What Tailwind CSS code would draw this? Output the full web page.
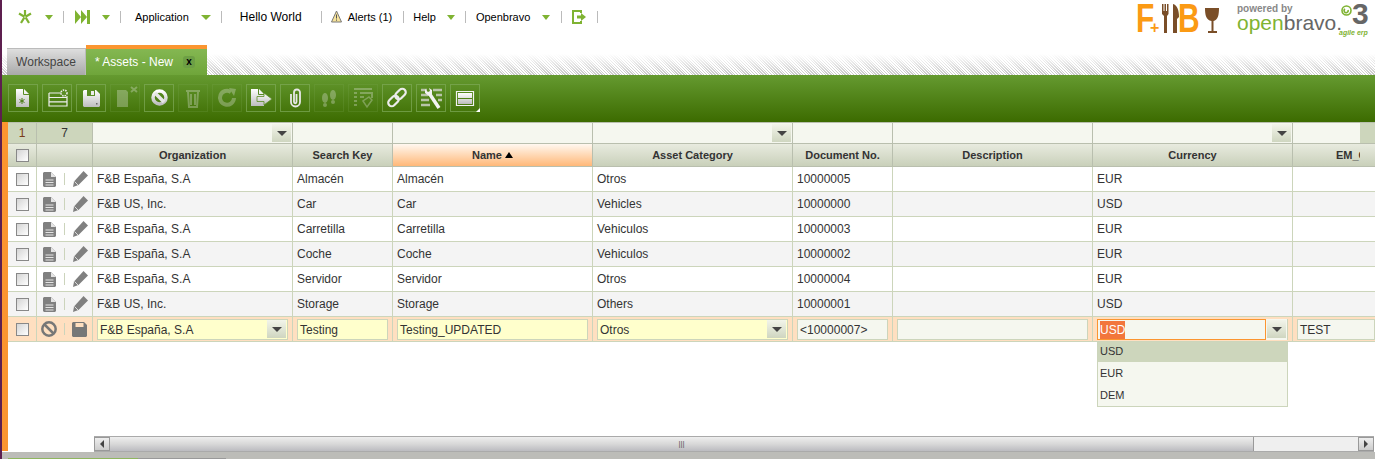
<!DOCTYPE html>
<html lang="en">
  <head>
    <meta charset="UTF-8" />
    <title>Assets - New</title>
    <script src="https://cdn.jsdelivr.net/npm/@tailwindcss/browser@4"></script>
  </head>
  <body class="h-[459px] w-[1375px] overflow-hidden bg-white font-['Liberation_Sans',Arial,sans-serif] text-[#333]">
    <svg class="absolute h-0 w-0">
      <defs>
        <linearGradient id="w" x1="0" y1="0" x2="0" y2="1"><stop offset="0" stop-color="#fff" /><stop offset="1" stop-color="#bdbdbd" /></linearGradient>
      </defs>
    </svg>
    <div class="flex h-[459px] flex-col border-l-2 border-[#5d1f4f]">
      <!-- top nav -->
      <div class="relative flex h-[45px] shrink-0 items-start pt-[11px] pl-[16px] text-[11px] leading-[13px] text-black">
        <svg class="mt-[-1px] h-[14px] w-[14px]" viewBox="0 0 14 14" fill="none" stroke="#7fb332" stroke-width="2.2"><path d="M7 0v6M1 3.5l5.5 3.2M13 3.5 7.5 6.7M3 13l3.4-5.6M11 13 7.6 7.4"/></svg>
        <i class="mt-[4px] ml-[13px] h-0 w-0 border-x-[4px] border-t-[5px] border-x-transparent border-t-[#7fb332]"></i>
        <i class="ml-[10px] h-[12px] w-px bg-[#bbb]"></i>
        <svg class="mt-[-1px] ml-[11px] h-[14px] w-[15px]" viewBox="0 0 15 14" fill="#7fb332"><path d="M0 0l6 7-6 7zM6 0l6 7-6 7z"/><path d="M12 0h3v14h-3z"/></svg>
        <i class="mt-[4px] ml-[12px] h-0 w-0 border-x-[4px] border-t-[5px] border-x-transparent border-t-[#7fb332]"></i>
        <i class="ml-[10px] h-[12px] w-px bg-[#bbb]"></i>
        <span class="ml-[14px]">Application</span>
        <i class="mt-[4px] ml-[12px] h-0 w-0 border-x-[5px] border-t-[5px] border-x-transparent border-t-[#7fb332]"></i>
        <i class="ml-[10px] h-[12px] w-px bg-[#bbb]"></i>
        <span class="ml-[18px] text-[12px]">Hello World</span>
        <i class="ml-[19px] h-[12px] w-px bg-[#bbb]"></i>
        <svg class="mt-[-1px] ml-[9px] h-[13px] w-[11px]" viewBox="0 0 11 13"><path d="M5.5 1 10.5 12H.5z" fill="#f7e39a" stroke="#777"/><path d="M5.5 4.5v4M5.5 9.5v1.2" stroke="#555"/></svg>
        <span class="ml-[6px]">Alerts (1)</span>
        <i class="ml-[11px] h-[12px] w-px bg-[#bbb]"></i>
        <span class="ml-[9px]">Help</span>
        <i class="mt-[4px] ml-[11px] h-0 w-0 border-x-[4px] border-t-[5px] border-x-transparent border-t-[#7fb332]"></i>
        <i class="ml-[10px] h-[12px] w-px bg-[#bbb]"></i>
        <span class="ml-[10px]">Openbravo</span>
        <i class="mt-[4px] ml-[12px] h-0 w-0 border-x-[4px] border-t-[5px] border-x-transparent border-t-[#7fb332]"></i>
        <i class="ml-[11px] h-[12px] w-px bg-[#bbb]"></i>
        <svg class="mt-[-1px] ml-[10px] h-[14px] w-[15px]" viewBox="0 0 15 14" fill="none" stroke="#7fb332" stroke-width="2"><path d="M9 3V1H1v12h8v-2"/><path d="M5 7h5" stroke-width="3"/><path d="M9 3l5 4-5 4z" fill="#7fb332" stroke="none"/></svg>
        <i class="ml-[10px] h-[12px] w-px bg-[#bbb]"></i>

        <!-- F+B logo -->
        <div class="absolute top-0 left-[1133px] h-[36px] w-[85px] font-bold">
          <span class="absolute top-[-2px] left-[1px] origin-left scale-x-75 text-[40px] leading-[40px] text-[#fb9a14]">F</span>
          <span class="absolute top-[20px] left-[15px] text-[16px] leading-[16px] text-[#fb9a14]">+</span>
          <svg class="absolute top-[4px] left-[27px] h-[29px] w-[18px]" viewBox="0 0 18 29" fill="#7a4e28"><path d="M0 0h1.500v7h1V0h1.500v7h1V0h1.500v10l-1.500 2v17H2V12L0 10zM11 0c4 1 6 6 6 13l-2 2v14h-4z"/></svg>
          <span class="absolute top-[-2px] left-[43px] origin-left scale-x-75 text-[40px] leading-[40px] text-[#fb9a14]">B</span>
          <svg class="absolute top-[8px] left-[70px] h-[25px] w-[15px]" viewBox="0 0 15 25" fill="#7a4e28"><path d="M0 0h14c0 7-1 12-5.500 13v10h3.500v2H3v-2h3.500V13C1 12 0 7 0 0z"/></svg>
        </div>
        <!-- openbravo logo -->
        <div class="absolute top-0 left-[1235px] h-[36px] w-[138px]">
          <span class="absolute top-[4px] left-0 text-[10px] leading-[10px] font-bold text-[#888]">powered by</span>
          <span class="absolute top-[14px] left-0 text-[21px] leading-[18px] text-[#7fb332]">open<span class="text-[#666]">bravo.</span></span>
          <svg class="absolute top-[5px] left-[104px] h-[11px] w-[11px]" viewBox="0 0 11 11" fill="none" stroke="#7fb332" stroke-width="1.6"><circle cx="5.5" cy="5.5" r="4.5"/><path d="M7 5a2 2 0 1 1-3-1"/></svg>
          <span class="absolute top-[0px] left-[115px] text-[30px] leading-[28px] font-bold text-[#666]">3</span>
          <span class="absolute top-[29px] left-[102px] text-[7px] leading-[7px] font-bold text-[#7fb332] italic">agile erp</span>
        </div>
      </div>

      <!-- tabs -->
      <div class="flex h-[30px] shrink-0 items-end bg-[linear-gradient(#fff_30%,rgba(255,255,255,0)),repeating-linear-gradient(45deg,#c8c8c8,#c8c8c8_1px,#fff_1px,#fff_2px)] pl-[5px] text-[12px]">
        <div class="flex h-[27px] w-[79px] items-center justify-center border-t border-r border-[#bbb] bg-[linear-gradient(#dedede,#a9a9a9)] text-[#444]">Workspace</div>
        <div class="flex h-[30px] w-[121px] items-center gap-[10px] border-t-4 border-[#fb9530] bg-[linear-gradient(#84b752,#6fa53a)] pl-[9px] text-white">
          <span>* Assets - New</span>
          <span class="flex h-[12px] w-[12px] items-center justify-center rounded-[3px] bg-[#6d9f45] pb-[1px] text-[10px] leading-none font-bold text-black">x</span>
        </div>
      </div>

      <!-- toolbar -->
      <div id="toolbar" class="flex h-[47px] shrink-0 items-start gap-[4px] bg-[linear-gradient(#659a30,#3c6b00)] pt-[9px] pl-[6px]"></div>

      <!-- grid with orange side strip -->
      <div class="flex min-h-0 flex-1 flex-col border-l-[6px] border-[#fb9530]">
        <div id="grid" class="relative grid h-[314px] shrink-0 grid-cols-[29px_56px_200px_100px_200px_200px_100px_200px_200px_83px] auto-rows-max overflow-hidden text-[12px] text-[#333]"></div>
        <!-- horizontal scrollbar -->
        <div class="mr-px ml-[86px] flex h-[16px] shrink-0 items-stretch border-y border-[#aaa] bg-[#efefef]">
          <div class="flex w-[16px] items-center justify-center border border-[#999] bg-[linear-gradient(#eee,#ccc)]"><i class="h-0 w-0 border-y-[4px] border-r-[4px] border-y-transparent border-r-[#444]"></i></div>
          <div class="flex w-[1144px] items-center justify-center border-r border-[#999] bg-[linear-gradient(#eee,#d8d8d8_50%,#bbbbc0)] text-[8px] leading-none text-[#555]">|||</div>
          <div class="flex-1"></div>
          <div class="flex w-[16px] items-center justify-center border border-[#999] bg-[linear-gradient(#eee,#ccc)]"><i class="h-0 w-0 border-y-[4px] border-l-[4px] border-y-transparent border-l-[#444]"></i></div>
        </div>
      </div>
      <div class="mt-[1px] flex h-[7px] shrink-0 items-end bg-[#bcbcb8]">
        <div class="ml-[6px] h-px w-[130px] bg-[#8fb65f]"></div>
        <div class="h-px w-[88px] bg-[#999]"></div>
      </div>
    </div>

    <script>
      const file = '<svg class="h-[15px] w-[13px]" viewBox="0 0 13 15"><path d="M1 0h7l5 5v9l-1 1H1l-1-1V1z" fill="#808080"/><path d="M8 0v5h5" fill="#e4e4e4"/><path d="M2.500 8h8M2.500 10.500h8M2.500 13h8" stroke="#e4e4e4"/></svg>';
      const pencil = '<svg class="h-[16px] w-[16px]" viewBox="0 0 16 16"><path d="M11.500 0l4.500 4.500-9.500 9.500-5.500 2 1-5.500z" fill="#808080"/><path d="M2.500 10.500l3.500 3.500" stroke="#ddd"/></svg>';
      const ban = '<svg class="h-[16px] w-[16px]" viewBox="0 0 16 16" fill="none" stroke="#777" stroke-width="2.5"><circle cx="8" cy="8" r="6.700"/><path d="M3 3l10 10"/></svg>';
      const disk = '<svg class="h-[15px] w-[15px]" viewBox="0 0 15 15"><path d="M1 0h11l3 3v11l-1 1H1l-1-1V1z" fill="#777"/><path d="M3.500 1h8v4h-8z" fill="#ffdfc0"/></svg>';
      const caret = '<i class="h-0 w-0 border-x-[5px] border-t-[5px] border-x-transparent border-t-[#444]"></i>';
      const check = '<span class="h-[13px] w-[13px] border border-[#888] bg-[linear-gradient(135deg,#d4d4d4,#fff)]"></span>';
      const sep = '<i class="mr-[7px] ml-[8px] h-[12px] w-px bg-[#ccd4bc]"></i>';
      const arrowBtn = `<span class="mr-px flex h-[18px] w-[19px] shrink-0 items-center justify-center bg-[linear-gradient(#f2f4ea,#cfd6c0)]">${caret}</span>`;

      // toolbar buttons: [svg inner, enabled]
      const g = "#5a8d25";
      const toolIcons = [
        [`<path d="M6 4h8l5 5v13H6z" fill="url(#w)"/><path d="M13.500 4v5.500H19" fill="none" stroke="${g}"/><path d="M12 13v6M9.500 14.500l5 3M14.500 14.500l-5 3" stroke="#4a7c15"/>`, 1],
        [`<path d="M5 8h15M5 8v13h18V11M5 12.500h18M5 16.800h18" fill="none" stroke="#eee" stroke-width="1.200"/><circle cx="20" cy="8" r="3" fill="${g}" stroke="#eee" stroke-width="1.500" stroke-dasharray="1.500 1"/>`, 1],
        [`<path d="M6 5h12l4 4v12l-1 1H6l-1-1V6z" fill="url(#w)"/><path d="M9 5h8v6H9z" fill="${g}"/><path d="M13 6h3v4h-3z" fill="#eee"/><path d="M18 18h1.500v1.500H18z" fill="#666"/>`, 1],
        [`<path d="M5 5h9l2 2v15H5z" fill="#eee"/><path d="M19 2l6 5M25 2l-6 5" stroke="#eee" stroke-width="2"/>`, 0],
        [`<circle cx="13.500" cy="12.500" r="6.500" fill="none" stroke="url(#w)" stroke-width="3.500"/><path d="M9 8l9 9" stroke="#e6e6e6" stroke-width="3.500"/>`, 1],
        [`<path d="M6 6h14M8 7l1 15h8l1-15M11 9v11M15 9v11" fill="none" stroke="#eee" stroke-width="2"/>`, 0],
        [`<path d="M20 13a7 7 0 1 1-3-6" fill="none" stroke="#eee" stroke-width="4"/><path d="M15 3l7 1-2 7z" fill="#eee"/>`, 0],
        [`<path d="M3 4h8l5 5v12H3z" fill="url(#w)"/><path d="M10.500 4v5.500H16" fill="none" stroke="${g}"/><path d="M9 11.500h7V8l8 6-8 6v-3.500H9z" fill="url(#w)" stroke="${g}" stroke-width=".8"/>`, 1],
        [`<path d="M9 9v8a4.500 4.500 0 0 0 9 0V7.500a3 3 0 0 0-6 0V17a1.200 1.200 0 0 0 2.500 0V9" fill="none" stroke="#e8e8e8" stroke-width="1.800"/>`, 1],
        [`<ellipse cx="9" cy="13" rx="3" ry="5" fill="#eee"/><ellipse cx="17" cy="10" rx="3" ry="5" fill="#eee"/><circle cx="9" cy="20" r="2" fill="#eee"/><circle cx="17" cy="17" r="2" fill="#eee"/>`, 0],
        [`<path d="M4 4h18M4 8h3M4 12h3M4 16h3M4 20h3M10 8h12v5M10 12h4" fill="none" stroke="#eee" stroke-width="2"/><path d="M13 16l4 6 5-7-3-3z" fill="none" stroke="#eee" stroke-width="1.500"/>`, 0],
        [`<rect x="13" y="3" width="7" height="12" rx="3.500" transform="rotate(45 16.500 9)" fill="none" stroke="#ececec" stroke-width="2.200"/><rect x="6" y="10" width="7" height="12" rx="3.500" transform="rotate(45 9.500 16)" fill="none" stroke="#ececec" stroke-width="2.200"/>`, 1],
        [`<path d="M3 5h6M3 10h7M3 15h8M3 20h9M15 5h9M18 10h6M20 15h4" stroke="#b8c4a8" stroke-width="2.500"/><path d="M11 8l10 15" stroke="#f2f2f2" stroke-width="3.500"/><path d="M7 4l3 3 2-1-1-3 3 2v5l-3 1-4-3z" fill="#f2f2f2"/>`, 1],
        [`<path d="M4.500 6.500h17v14h-17z" fill="none" stroke="#f2f2f2" stroke-width="1.200"/><path d="M6 8h14v5H6zM6 14h14v5H6z" fill="url(#w)"/>`, 1],
      ];
      document.getElementById("toolbar").innerHTML = toolIcons
        .map(([icon, on], i) =>
          `<div class="relative flex h-[28px] w-[30px] items-center justify-center border border-[#7fa958]/70 ${on ? "" : "opacity-30"}">
            <svg class="h-[26px] w-[26px]" viewBox="0 0 26 26">${icon}</svg>
            ${i === 13 ? '<svg class="absolute right-[-1px] bottom-[-1px] h-[4px] w-[4px]" viewBox="0 0 4 4" fill="#fff"><path d="M4 0v4H0z"/></svg>' : ""}
          </div>`
        )
        .join("");

      const cell = "flex items-center overflow-hidden whitespace-nowrap border-r border-b border-[#ccd5bb]";
      const headCell = "flex items-center overflow-hidden whitespace-nowrap border-r border-b border-[#b9bfae]";
      const rows = [
        ["F&amp;B España, S.A", "Almacén", "Almacén", "Otros", "10000005", "", "EUR"],
        ["F&amp;B US, Inc.", "Car", "Car", "Vehicles", "10000000", "", "USD"],
        ["F&amp;B España, S.A", "Carretilla", "Carretilla", "Vehiculos", "10000003", "", "EUR"],
        ["F&amp;B España, S.A", "Coche", "Coche", "Vehiculos", "10000002", "", "EUR"],
        ["F&amp;B España, S.A", "Servidor", "Servidor", "Otros", "10000004", "", "EUR"],
        ["F&amp;B US, Inc.", "Storage", "Storage", "Others", "10000001", "", "USD"],
      ];
      let html = "";

      // filter row
      html += `<div class="${headCell} h-[22px] justify-center border-t bg-[#cdd6bc] text-[#7a3b1a]">1</div>`;
      html += `<div class="${headCell} h-[22px] justify-center border-t bg-[#cdd6bc]">7</div>`;
      [1, 0, 0, 1, 0, 0, 1, 0].forEach((hasArrow, i) => {
        html += `<div class="${headCell} h-[22px] justify-end border-t bg-[#f5f7ef]">${hasArrow ? arrowBtn : ""}${i === 7 ? '<span class="h-[20px] w-[15px] bg-[#cdd6bc]"></span>' : ""}</div>`;
      });

      // header row
      const head = "font-bold text-[11px] justify-center bg-[linear-gradient(#e8ebdf,#c9d0ba)]";
      html += `<div class="${headCell} ${head} h-[23px]">${check}</div><div class="${headCell} ${head} h-[23px]"></div>`;
      ["Organization", "Search Key", "Name", "Asset Category", "Document No.", "Description", "Currency"].forEach((t) => {
        if (t === "Name") {
          html += `<div class="${headCell} h-[23px] justify-center bg-[linear-gradient(#fff8f0,#ffb878)] text-[11px] font-bold">Name&nbsp;<i class="h-0 w-0 border-x-[4px] border-b-[6px] border-x-transparent border-b-black"></i></div>`;
        } else {
          html += `<div class="${headCell} ${head} h-[23px]">${t}</div>`;
        }
      });
      html += `<div class="${headCell} h-[23px] bg-[linear-gradient(#e8ebdf,#c9d0ba)] pl-[43px] text-[11px] font-bold"><span class="w-[24px] overflow-hidden">EM_Obuiapp</span></div>`;

      // data rows
      rows.forEach((r, i) => {
        const bg = i % 2 ? "bg-[#f4f4f4]" : "bg-white";
        html += `<div class="${cell} ${bg} h-[25px] justify-center">${check}</div>`;
        html += `<div class="${cell} ${bg} h-[25px] pl-[6px]">${file}${sep}${pencil}</div>`;
        [...r, ""].forEach((t) => {
          html += `<div class="${cell} ${bg} h-[25px] pl-[4px]">${t}</div>`;
        });
      });

      // edit row
      const ed = `${cell} h-[25px] bg-[#ffdfc0] px-[4px]`;
      const box = "flex h-[21px] w-full items-center border border-[#ccd5bb] pl-[2px]";
      const val = (t) => `<span class="mt-[2px]">${t}</span>`;
      html += `<div class="${cell} h-[25px] justify-center bg-[#ffdfc0]">${check}</div>`;
      html += `<div class="${cell} h-[25px] bg-[#ffdfc0] pl-[4px]">${ban}<i class="mr-[7px] ml-[7px] h-[12px] w-px bg-[#ccd4bc]"></i>${disk}</div>`;
      html += `<div class="${ed}"><div class="${box} justify-between bg-[#ffffcc]">${val("F&amp;B España, S.A")}${arrowBtn}</div></div>`;
      html += `<div class="${ed}"><div class="${box} bg-[#ffffcc]">${val("Testing")}</div></div>`;
      html += `<div class="${ed}"><div class="${box} bg-[#ffffcc]">${val("Testing_UPDATED")}</div></div>`;
      html += `<div class="${ed}"><div class="${box} justify-between bg-[#ffffcc]">${val("Otros")}${arrowBtn}</div></div>`;
      html += `<div class="${ed}"><div class="${box} bg-[#f5f7ef]">${val("&lt;10000007&gt;")}</div></div>`;
      html += `<div class="${ed}"><div class="${box} bg-[#f5f7ef]"></div></div>`;
      html += `<div class="${ed}"><div class="flex h-[21px] w-full items-center border-r border-[#ccd5bb] bg-[#f5f7ef]"><div class="flex h-[21px] flex-1 items-center border border-[#fb9530] pl-[2px]"><span class="mt-[1px] bg-[#f2763c] text-white">USD</span></div><span class="ml-px">${arrowBtn}</span></div></div>`;
      html += `<div class="${cell} h-[25px] bg-[#ffdfc0] pl-[4px]"><div class="${box} bg-[#f5f7ef]">${val("TEST")}</div></div>`;

      // currency drop down
      html += `<div class="absolute top-[220px] left-[1089px] flex w-[191px] flex-col border-x border-b border-[#ccd5bb] bg-[#f5f7ef] text-[11px]">
        <div class="flex h-[20px] items-center bg-[#cdd6bc] pb-px pl-[2px]">USD</div>
        <div class="flex h-[22px] items-center pl-[2px]">EUR</div>
        <div class="flex h-[22px] items-center pl-[2px]">DEM</div>
      </div>`;

      document.getElementById("grid").innerHTML = html;
    </script>
  </body>
</html>
